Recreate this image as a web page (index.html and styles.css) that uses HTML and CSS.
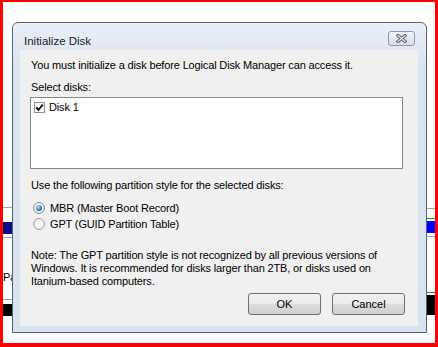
FILE: index.html
```html
<!DOCTYPE html>
<html lang="en">
<head>
    <meta charset="UTF-8">
    <title>Initialize Disk</title>
    <link rel="stylesheet" href="styles.css">
</head>
<body>
    <div class="screen">
        <!-- Disk Management window behind the dialog -->
        <div class="backdrop">
            <div class="pane pane-left">
                <div class="rule rule-a"></div>
                <div class="bar bar-navy"></div>
                <div class="rule rule-b"></div>
                <div class="pane-label">Pa</div>
                <div class="rule rule-c"></div>
                <div class="bar bar-black"></div>
            </div>
            <div class="pane pane-right">
                <div class="rule rule-d"></div>
                <div class="stripe stripe-a"></div>
                <div class="bar bar-blue"></div>
                <div class="rule rule-e"></div>
                <div class="stripe stripe-b"></div>
                <div class="bar bar-black-tall"></div>
            </div>
        </div>

        <div class="dialog">
            <div class="titlebar">
                <span class="title">Initialize Disk</span>
                <button class="close" aria-label="Close">
                    <svg width="11" height="9" viewBox="0 0 11 9">
                        <path d="M2 1.5 L9 7.5 M9 1.5 L2 7.5" stroke="#5f6978" stroke-width="3.2" stroke-linecap="square" fill="none"/>
                        <path d="M2 1.5 L9 7.5 M9 1.5 L2 7.5" stroke="#e6ebf1" stroke-width="1.2" stroke-linecap="square" fill="none"/>
                    </svg>
                </button>
            </div>
            <div class="client">
                <p class="line">You must initialize a disk before Logical Disk Manager can access it.</p>
                <p class="line label-disks">Select disks:</p>
                <div class="listbox">
                    <div class="list-item">
                        <span class="checkbox">
                            <svg width="9" height="9" viewBox="0 0 9 9">
                                <path d="M1.3 4.3 L3.5 6.8 L7.8 1.6" stroke="#000" stroke-width="1.8" fill="none"/>
                            </svg>
                        </span>
                        Disk 1
                    </div>
                </div>
                <p class="line label-style">Use the following partition style for the selected disks:</p>
                <div class="radio-row first"><span class="radio checked"></span>MBR (Master Boot Record)</div>
                <div class="radio-row"><span class="radio"></span>GPT (GUID Partition Table)</div>
                <p class="line note">Note: The GPT partition style is not recognized by all previous versions of<br>Windows. It is recommended for disks larger than 2TB, or disks used on<br>Itanium-based computers.</p>
                <div class="buttons">
                    <button class="btn">OK</button>
                    <button class="btn">Cancel</button>
                </div>
            </div>
        </div>
    </div>
</body>
</html>
```

FILE: styles.css
```css
body {
    margin: 0;
    background: #fff;
    font-family: "Liberation Sans", Arial, sans-serif;
}
.screen {
    position: relative;
    width: 438px;
    height: 347px;
    box-sizing: border-box;
    border: 3px solid #ff0000;
    border-top-width: 2px;
    border-bottom-width: 4px;
    background: #fff;
    overflow: hidden;
}

/* background window */
.backdrop {
    display: flex;
    justify-content: space-between;
    height: 100%;
}
.pane {
    display: flex;
    flex-direction: column;
}
.pane-left {
    width: 9px;
    overflow: hidden;
}
.pane-right {
    width: 8px;
}
.rule {
    height: 1px;
    background: #a5a5a5;
}
.rule-a { margin-top: 205px; }
.rule-b { margin-top: 3px; }
.rule-c { margin-top: 15px; }
.rule-d { margin-top: 206px; }
.rule-e { margin-top: 3px; }
.bar-navy {
    margin-top: 14px;
    height: 12px;
    background: #0c0c86;
}
.bar-black {
    margin-top: 4px;
    height: 12px;
    background: #000;
}
.pane-label {
    margin-top: 33px;
    width: 9px;
    overflow: hidden;
    font-size: 11px;
    line-height: 13px;
    color: #000;
    white-space: nowrap;
}
.stripe {
    height: 1px;
    background: #1f8a3a;
}
.stripe-a { margin-top: 9px; }
.stripe-b { margin-top: 55px; }
.bar-blue {
    margin-top: 2px;
    height: 12px;
    background: #0000ff;
}
.bar-black-tall {
    margin-top: 2px;
    height: 20px;
    background: #000;
}

/* dialog */
.dialog {
    position: absolute;
    left: 9px;
    top: 20px;
    width: 415px;
    height: 311px;
    box-sizing: border-box;
    border: 1px solid #5b6372;
    border-radius: 6px 6px 0 0;
    background: linear-gradient(#e9eff7, #dbe5f1 40px, #d8e3f0);
    display: flex;
    flex-direction: column;
}
.titlebar {
    height: 27px;
    display: flex;
    justify-content: space-between;
    align-items: flex-start;
    padding: 0 11px;
}
.title {
    margin-top: 11px;
    font-size: 11.5px;
    line-height: 14px;
    color: #222;
}
.close {
    margin-top: 8px;
    width: 27px;
    height: 15px;
    padding: 0;
    border: 1px solid #8e99a8;
    border-radius: 3px;
    background: linear-gradient(#f3f6fa, #e2e8f0 50%, #d6dfea);
    display: flex;
    align-items: center;
    justify-content: center;
}
.client {
    flex: 1;
    margin: 0 8px 6px 7px;
    padding: 9px 13px 0 11px;
    background: #f0f0f0;
    font-size: 11px;
    letter-spacing: -0.15px;
    color: #000;
}
.line {
    margin: 0;
    line-height: 13px;
    white-space: nowrap;
}
.label-disks {
    margin-top: 9px;
}
.listbox {
    margin: 3px 0 0 -1px;
    width: 373px;
    height: 72px;
    box-sizing: border-box;
    border: 1px solid #828790;
    background: #fff;
    padding: 4px 3px;
}
.list-item {
    display: flex;
    align-items: center;
    gap: 4px;
    height: 11px;
    line-height: 11px;
}
.checkbox {
    width: 11px;
    height: 11px;
    box-sizing: border-box;
    border: 1px solid #8e8f8f;
    background: linear-gradient(135deg, #f4f4f4, #fff);
    display: flex;
    align-items: center;
    justify-content: center;
}
.label-style {
    margin-top: 10px;
}
.radio-row {
    display: flex;
    align-items: center;
    gap: 5px;
    height: 16px;
    padding-left: 2px;
    white-space: nowrap;
}
.radio-row.first {
    margin-top: 8px;
}
.radio {
    width: 12px;
    height: 12px;
    box-sizing: border-box;
    border-radius: 50%;
    border: 1px solid #a2a2a2;
    background: radial-gradient(circle at 50% 40%, #fdfdfd, #e2e2e2);
    display: flex;
    align-items: center;
    justify-content: center;
}
.radio.checked {
    border-color: #8a8f96;
}
.radio.checked::after {
    content: "";
    width: 6px;
    height: 6px;
    border-radius: 50%;
    background: radial-gradient(circle at 40% 35%, #b6ecfb, #2b86b6 55%, #0b3c62);
}
.note {
    margin-top: 17px;
}
.buttons {
    margin-top: 5px;
    display: flex;
    justify-content: flex-end;
    gap: 11px;
}
.btn {
    width: 73px;
    height: 22px;
    padding: 0;
    border: 1px solid #707070;
    border-radius: 3px;
    background: linear-gradient(#f2f2f2, #ebebeb 48%, #dddddd 52%, #cfcfcf);
    font-family: "Liberation Sans", Arial, sans-serif;
    font-size: 11px;
    color: #000;
}
```
